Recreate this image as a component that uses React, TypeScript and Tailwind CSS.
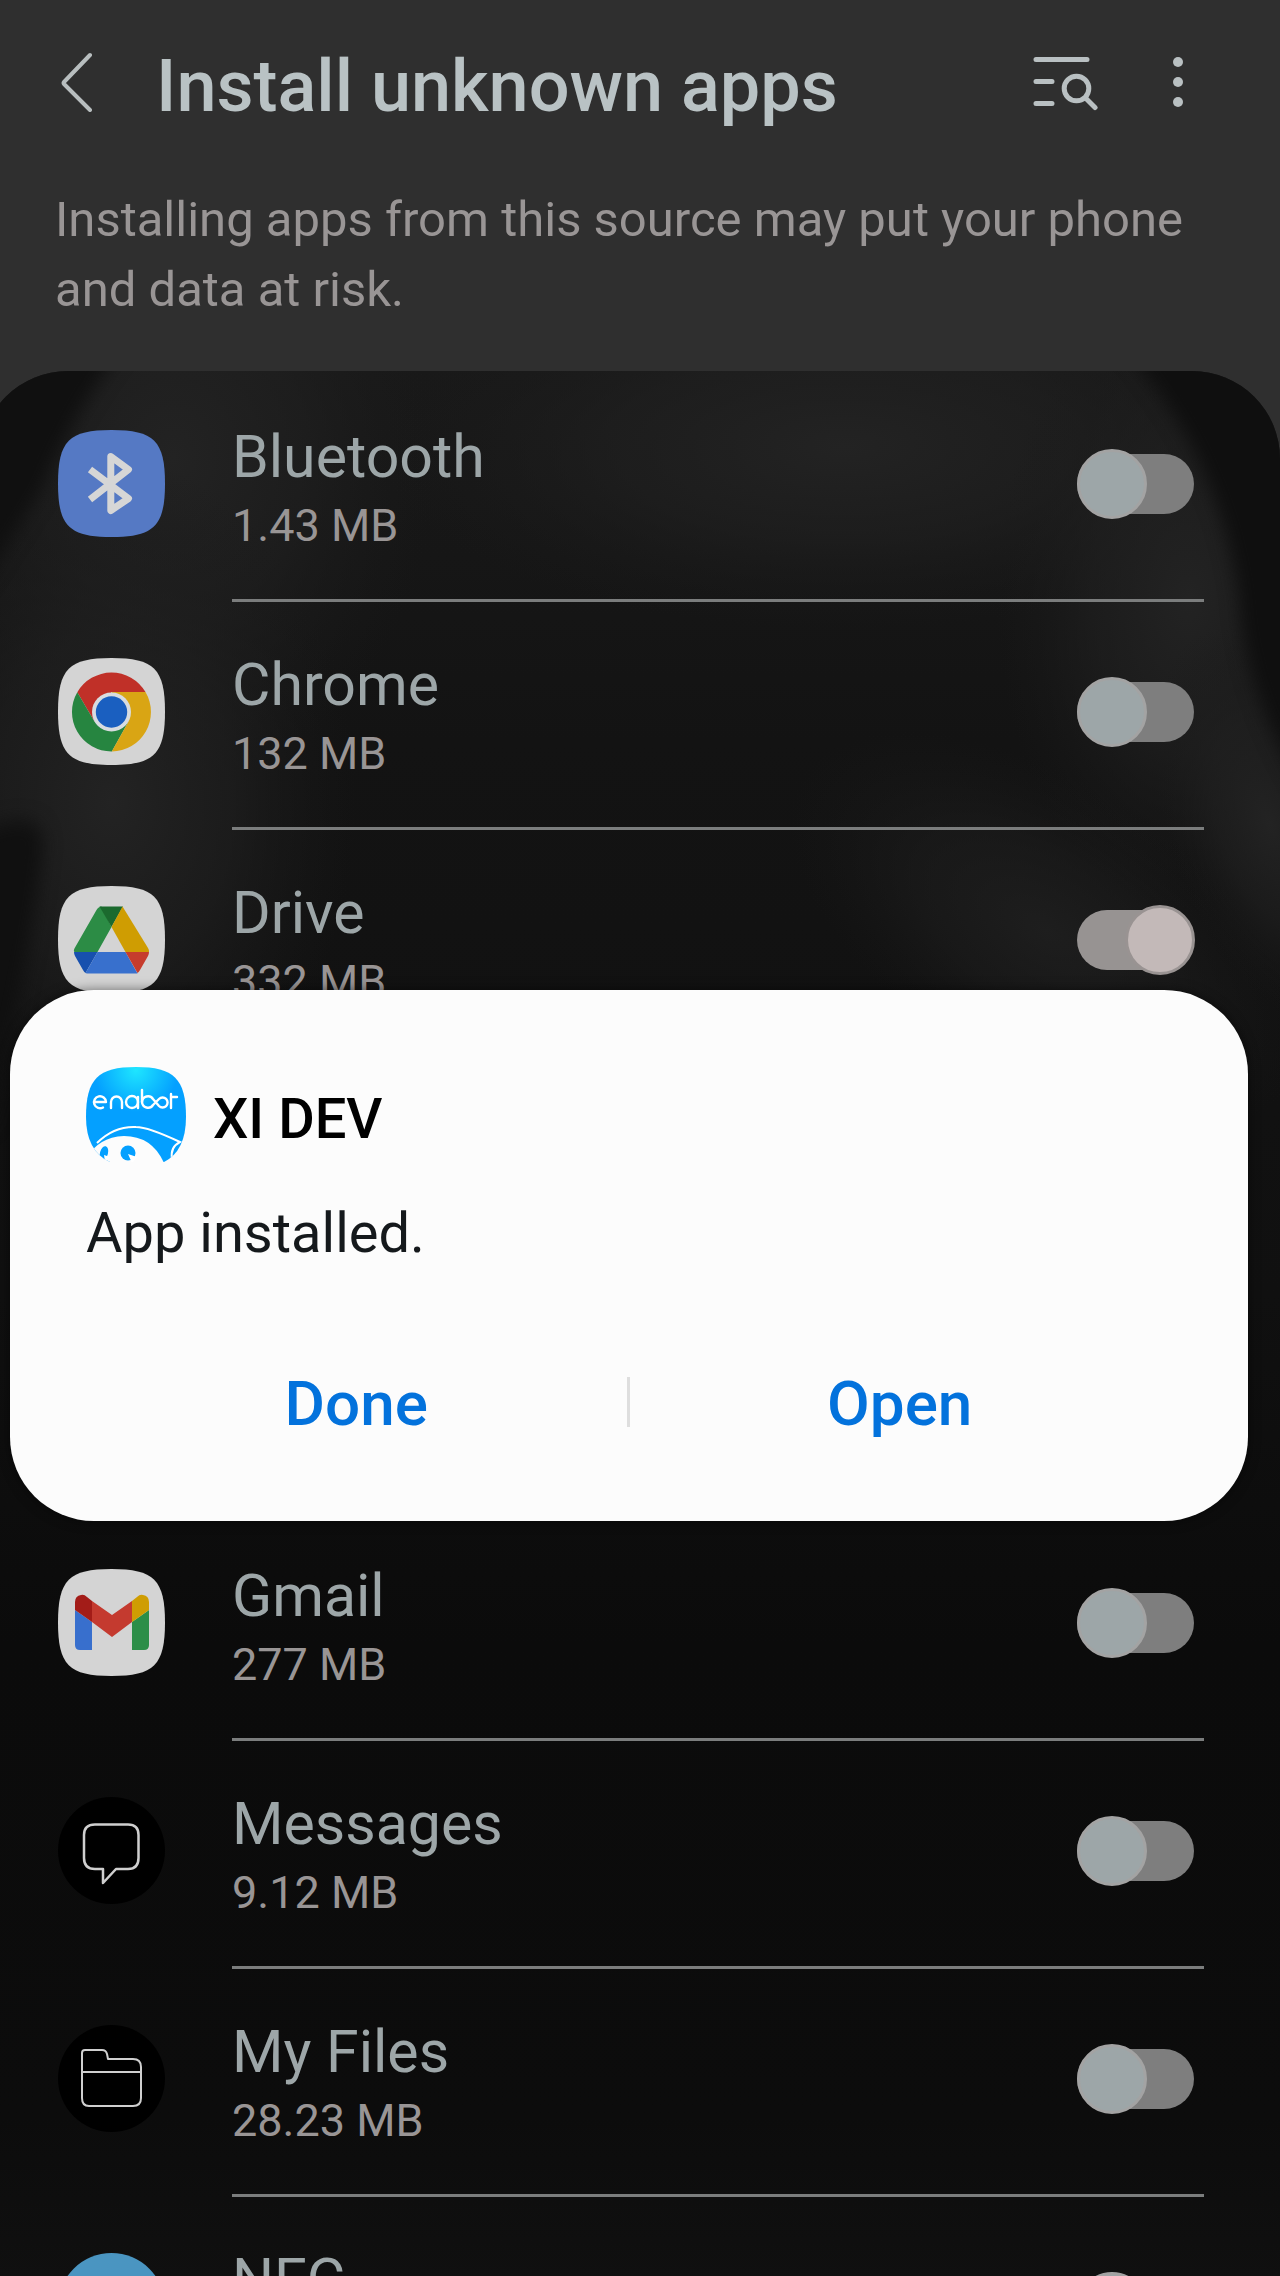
import { useState } from "react"
import type { ReactNode } from "react"

interface AppItem {
  id: string
  name: string
  size: string
  enabled: boolean
  icon: ReactNode
}

// rounded "squircle" shape shared by the launcher icons
const SQUIRCLE = "M53.5 0C96 0 107 11 107 53.5S96 107 53.5 107 0 96 0 53.5 11 0 53.5 0Z"

const BluetoothIcon = () => (
  <svg viewBox="0 0 107 107" className="size-[107px]" aria-hidden="true">
    <path d={SQUIRCLE} fill="#5579c4" />
    <path d="M32 39.500L70.500 68.500L52.800 80.500V26.500L70.500 39.500L32 69.500" fill="none" stroke="#d6d6d6" strokeWidth="7" strokeLinejoin="round" />
  </svg>
)

const ChromeIcon = () => (
  <svg viewBox="0 0 107 107" className="size-[107px]" aria-hidden="true">
    <path d={SQUIRCLE} fill="#d4d4d4" />
    <path d="M53.500 34H87.500A39.500 39.500 0 0 0 19.300 34.200L36.600 63.800Z" fill="#c03028" />
    <path d="M36.600 63.800L19.300 34.200A39.500 39.500 0 0 0 53.800 93.500L70.400 63.800Z" fill="#268540" />
    <path d="M70.400 63.800L53.800 93.500A39.500 39.500 0 0 0 87.500 34H53.500Z" fill="#d9a514" />
    <circle cx="53.500" cy="54" r="19.500" fill="#d8dce0" />
    <circle cx="53.500" cy="54" r="15.700" fill="#1a5fc0" />
  </svg>
)

const DriveIcon = () => (
  <svg viewBox="0 0 107 107" className="size-[107px]" aria-hidden="true">
    <path d={SQUIRCLE} fill="#d4d4d4" />
    <path d="M53.500 41L39.500 66H16.500Q15 65 17 61.500L38.500 24Q40.500 20.500 43.500 20.500Z" fill="#2c8c45" />
    <path d="M41.500 20.500H65L53.500 41Z" fill="#1b6a2e" />
    <path d="M64.500 20.500L90 62Q91.500 64.500 91 66H67.500L53.500 41Z" fill="#cf9d02" />
    <path d="M16 66H39.500L27.500 87Q26 86 25 84L17 70Q16 68 16 66Z" fill="#1750ae" />
    <path d="M39.500 66H67.500L79.500 87.500H31Q28.500 87.500 27.500 87Z" fill="#3870cd" />
    <path d="M67.500 66H91Q91 68 90 70L82 84Q81 86 79.500 87Z" fill="#c63c2d" />
  </svg>
)

const GmailIcon = () => (
  <svg viewBox="0 0 107 107" className="size-[107px]" aria-hidden="true">
    <path d={SQUIRCLE} fill="#d4d4d4" />
    <path d="M17 41L34 53V81H22Q17 81 17 76Z" fill="#386fcd" />
    <path d="M74 53L91 41V76Q91 81 86 81H74Z" fill="#2c8e48" />
    <path d="M34 32L54 46L74 32V53L54 68L34 53Z" fill="#c43a2f" />
    <path d="M34 32V53L17 41V33Q17 27 23 26Q26 25 29 28Z" fill="#a31c18" />
    <path d="M74 32V53L91 41V33Q91 27 85 26Q82 25 79 28Z" fill="#cf9d02" />
  </svg>
)

const MessagesIcon = () => (
  <svg viewBox="0 0 107 107" className="size-[107px]" aria-hidden="true">
    <circle cx="53.500" cy="53.500" r="53.500" fill="#000" />
    <path d="M37 27.500H70Q80.500 27.500 80.500 38V61Q80.500 72 70 72H58L45 86V72H37Q26 72 26 61V38Q26 27.500 37 27.500Z" fill="none" stroke="#cfcfcf" strokeWidth="2.500" strokeLinejoin="round" />
  </svg>
)

const FilesIcon = () => (
  <svg viewBox="0 0 107 107" className="size-[107px]" aria-hidden="true">
    <circle cx="53.500" cy="53.500" r="53.500" fill="#000" />
    <path d="M27 25H44Q48 25 49 29L50 34H75Q83 34 83 42V73Q83 81 75 81H31Q24 81 24 73V28Q24 25 27 25ZM24 47H83" fill="none" stroke="#cfcfcf" strokeWidth="2" strokeLinejoin="round" />
  </svg>
)

const NfcIcon = () => (
  <svg viewBox="0 0 107 107" className="size-[107px]" aria-hidden="true">
    <circle cx="53.500" cy="53.500" r="53.500" fill="#4a95c1" />
  </svg>
)

const EnabotIcon = () => (
  <svg viewBox="0 0 100 100" className="size-[100px] shrink-0" role="img" aria-label="enabot">
    <defs>
      <radialGradient id="glow" cx="0.5" cy="0.03" r="0.42">
        <stop offset="0" stopColor="#1ee6ff" />
        <stop offset="1" stopColor="#04a0ff" />
      </radialGradient>
      <clipPath id="mask">
        <path d="M50 0C88 0 100 12 100 50Q100 84 78 95H24Q0 84 0 50C0 12 12 0 50 0Z" />
      </clipPath>
    </defs>
    <g clipPath="url(#mask)">
      <rect width="100" height="100" fill="url(#glow)" />
      <path d="M0 92Q12 70 38 69Q66 69 78 96L76 100H0Z" fill="#fcfcfc" />
      <path d="M11 76Q28 59 50 60Q62 60 94 75Q84 80 86 92" fill="none" stroke="#fff" strokeWidth="2" />
      <ellipse cx="18" cy="86" rx="4" ry="7" transform="rotate(15 18 86)" fill="#04a0ff" />
      <circle cx="42" cy="86" r="7.500" fill="#04a0ff" />
      <path d="M42 87L51 90L46 96Z M18 88L24 90L19 95Z" fill="#fff" />
    </g>
    <g fill="none" stroke="#fff" strokeWidth="2.400" strokeLinecap="round" strokeLinejoin="round">
      <path d="M10 35H20A6 6 0 1 0 17 40.500" />
      <path d="M25 41V35A5.500 5.500 0 0 1 36 35V41" />
      <circle cx="46" cy="35" r="6" />
      <path d="M52 30V41M56 23V35" />
      <path d="M56 35A6 6 0 0 0 67 38L73 32A5 5 0 1 1 73 39L67 32A6 6 0 0 0 56 35" />
      <path d="M85 27V41M85 30H91" />
    </g>
  </svg>
)

const apps: AppItem[] = [
  { id: "bluetooth", name: "Bluetooth", size: "1.43 MB", enabled: false, icon: <BluetoothIcon /> },
  { id: "chrome", name: "Chrome", size: "132 MB", enabled: false, icon: <ChromeIcon /> },
  { id: "drive", name: "Drive", size: "332 MB", enabled: true, icon: <DriveIcon /> },
]

const moreApps: AppItem[] = [
  { id: "gmail", name: "Gmail", size: "277 MB", enabled: false, icon: <GmailIcon /> },
  { id: "messages", name: "Messages", size: "9.12 MB", enabled: false, icon: <MessagesIcon /> },
  { id: "files", name: "My Files", size: "28.23 MB", enabled: false, icon: <FilesIcon /> },
  { id: "nfc", name: "NFC", size: "", enabled: false, icon: <NfcIcon /> },
]

const AppRow = ({ app }: { app: AppItem }) => {
  const [on, setOn] = useState(app.enabled)

  return (
    <li className="flex h-[228px] pl-[58px] pr-[76px]">
      <div className="w-[174px] shrink-0 pt-14">{app.icon}</div>
      <div className="flex flex-1 justify-between border-b-[3px] border-[#7b7d7d] pr-2.5">
        <label htmlFor={app.id} className="pt-12">
          <span className="block text-[59px] leading-[70px] text-[#9da6a8]">{app.name}</span>
          <span className="block text-[45px] leading-[68px] text-[#999595]">{app.size}</span>
        </label>
        <div className="pt-[75px]">
          <div className="relative flex h-[70px] w-[117px] items-center">
            <input
              id={app.id}
              type="checkbox"
              role="switch"
              checked={on}
              onChange={() => setOn(!on)}
              className="peer h-[60px] w-full appearance-none rounded-full bg-[#7e7e7e] checked:bg-[#979392]"
            />
            <span className="pointer-events-none absolute left-0 size-[70px] rounded-full border-[3px] border-[#a3a3a3] bg-[#9da6a8] peer-checked:left-12 peer-checked:border-[#999392] peer-checked:bg-[#c3b9b8]" />
          </div>
        </div>
      </div>
    </li>
  )
}

// soft folds of the dark wallpaper behind the list
const Wallpaper = () => (
  <svg viewBox="0 0 1280 1906" preserveAspectRatio="none" className="absolute inset-0 size-full" aria-hidden="true">
    <defs>
      <radialGradient id="light">
        <stop offset="0" stopColor="#232323" />
        <stop offset="0.500" stopColor="#202020" stopOpacity="0.650" />
        <stop offset="1" stopColor="#1a1a1a" stopOpacity="0" />
      </radialGradient>
      <linearGradient id="base" x1="0" y1="0" x2="0" y2="1">
        <stop offset="0" stopColor="#191919" />
        <stop offset="0.180" stopColor="#131313" />
        <stop offset="0.450" stopColor="#101010" />
        <stop offset="0.620" stopColor="#0b0b0b" />
        <stop offset="0.850" stopColor="#0c0c0c" />
        <stop offset="0.950" stopColor="#111111" />
        <stop offset="1" stopColor="#121212" />
      </linearGradient>
      <filter id="edge" x="-50%" y="-50%" width="200%" height="200%" colorInterpolationFilters="sRGB">
        <feGaussianBlur stdDeviation="9" />
      </filter>
    </defs>
    <rect width="1280" height="1906" fill="url(#base)" />
    <ellipse cx="850" cy="70" rx="460" ry="170" fill="url(#light)" />
    <ellipse cx="190" cy="80" rx="260" ry="300" fill="url(#light)" />
    <ellipse cx="130" cy="400" rx="240" ry="320" fill="url(#light)" />
    <ellipse cx="1190" cy="210" rx="190" ry="290" fill="url(#light)" />
    <ellipse cx="1050" cy="520" rx="280" ry="140" transform="rotate(30 1050 520)" fill="url(#light)" opacity="0.700" />
    <ellipse cx="1270" cy="420" rx="100" ry="190" transform="rotate(-20 1270 420)" fill="url(#light)" />
    <path d="M-40 -40H155Q95 30 60 110L-40 260Z" fill="#101010" filter="url(#edge)" />
    <path d="M1110 -40H1340V440Q1246 320 1240 210Q1220 70 1110 -40Z" fill="#0f0f0f" filter="url(#edge)" />
    <path d="M-40 450Q60 390 62 440Q50 540 10 700H-40Z" fill="#101010" filter="url(#edge)" />
  </svg>
)

const Header = () => (
  <header className="h-[371px] px-[55px] pt-[52px]">
    <div className="flex items-start">
      <button type="button" aria-label="Back" className="w-[101px]">
        <svg viewBox="0 0 40 60" className="h-[60px] w-10" fill="none" stroke="#b8bebf" strokeWidth="4" strokeLinecap="round" strokeLinejoin="round">
          <path d="M35 3L9 30Q8 31 9 32L35 58" />
        </svg>
      </button>
      <h1 className="flex-1 text-[72px] font-medium leading-[70px] text-[#b9c2c4]">Install unknown apps</h1>
      <button type="button" aria-label="Search list" className="mr-[73px] pt-[5px]">
        <svg viewBox="0 0 66 54" className="h-[54px] w-[66px]" fill="none" stroke="#b9c0c2" strokeWidth="5" strokeLinecap="round">
          <path d="M3 2.500H54M3 24.500H19M3 46.500H19" />
          <circle cx="43.500" cy="31.500" r="12.300" />
          <path d="M52.500 41L62 50.500" />
        </svg>
      </button>
      <button type="button" aria-label="More options" className="mr-[41px] pt-[5px]">
        <svg viewBox="0 0 12 50" className="h-[50px] w-3" fill="#b9c0c2">
          <circle cx="6" cy="5" r="5" />
          <circle cx="6" cy="25" r="5" />
          <circle cx="6" cy="45" r="5" />
        </svg>
      </button>
    </div>
    <p className="pt-[63px] text-[49px] leading-[70px] text-[#999595]">
      Installing apps from this source may put your phone and data at risk.
    </p>
  </header>
)

const InstalledDialog = () => (
  <div role="dialog" aria-labelledby="dialog-title" className="absolute left-2.5 right-8 top-[990px] flex flex-col rounded-[84px] bg-[#fcfcfc] pb-[79px] pl-[76px] pr-[78px] pt-[77px] shadow-[0_0_12px_rgba(0,0,0,0.5)]">
    <div className="flex items-center gap-[27px]">
      <EnabotIcon />
      <h2 id="dialog-title" className="pt-1 text-[56px] font-medium leading-[66px] text-black">XI DEV</h2>
    </div>
    <p className="pt-[33px] text-[56px] leading-[66px] text-[#15191c]">App installed.</p>
    <div className="flex items-center pt-[100px]">
      <button type="button" className="flex-1 text-[62px] font-medium leading-[76px] text-[#0372dc]">Done</button>
      <span className="mb-1 h-[50px] w-[3px] bg-[#dedede]" />
      <button type="button" className="flex-1 text-[62px] font-medium leading-[76px] text-[#0372dc]">Open</button>
    </div>
  </div>
)

export default function App() {
  return (
    <div className="relative h-screen overflow-hidden bg-[#2f2f2f] font-[Roboto,sans-serif]">
      <Header />
      <main className="relative -ml-5 overflow-hidden rounded-t-[88px] pl-5 pt-[3px]">
        <Wallpaper />
        <ul className="relative">
          {apps.map((app) => <AppRow key={app.id} app={app} />)}
        </ul>
        <ul className="relative mt-[455px]">
          {moreApps.map((app) => <AppRow key={app.id} app={app} />)}
        </ul>
      </main>
      <InstalledDialog />
    </div>
  )
}
